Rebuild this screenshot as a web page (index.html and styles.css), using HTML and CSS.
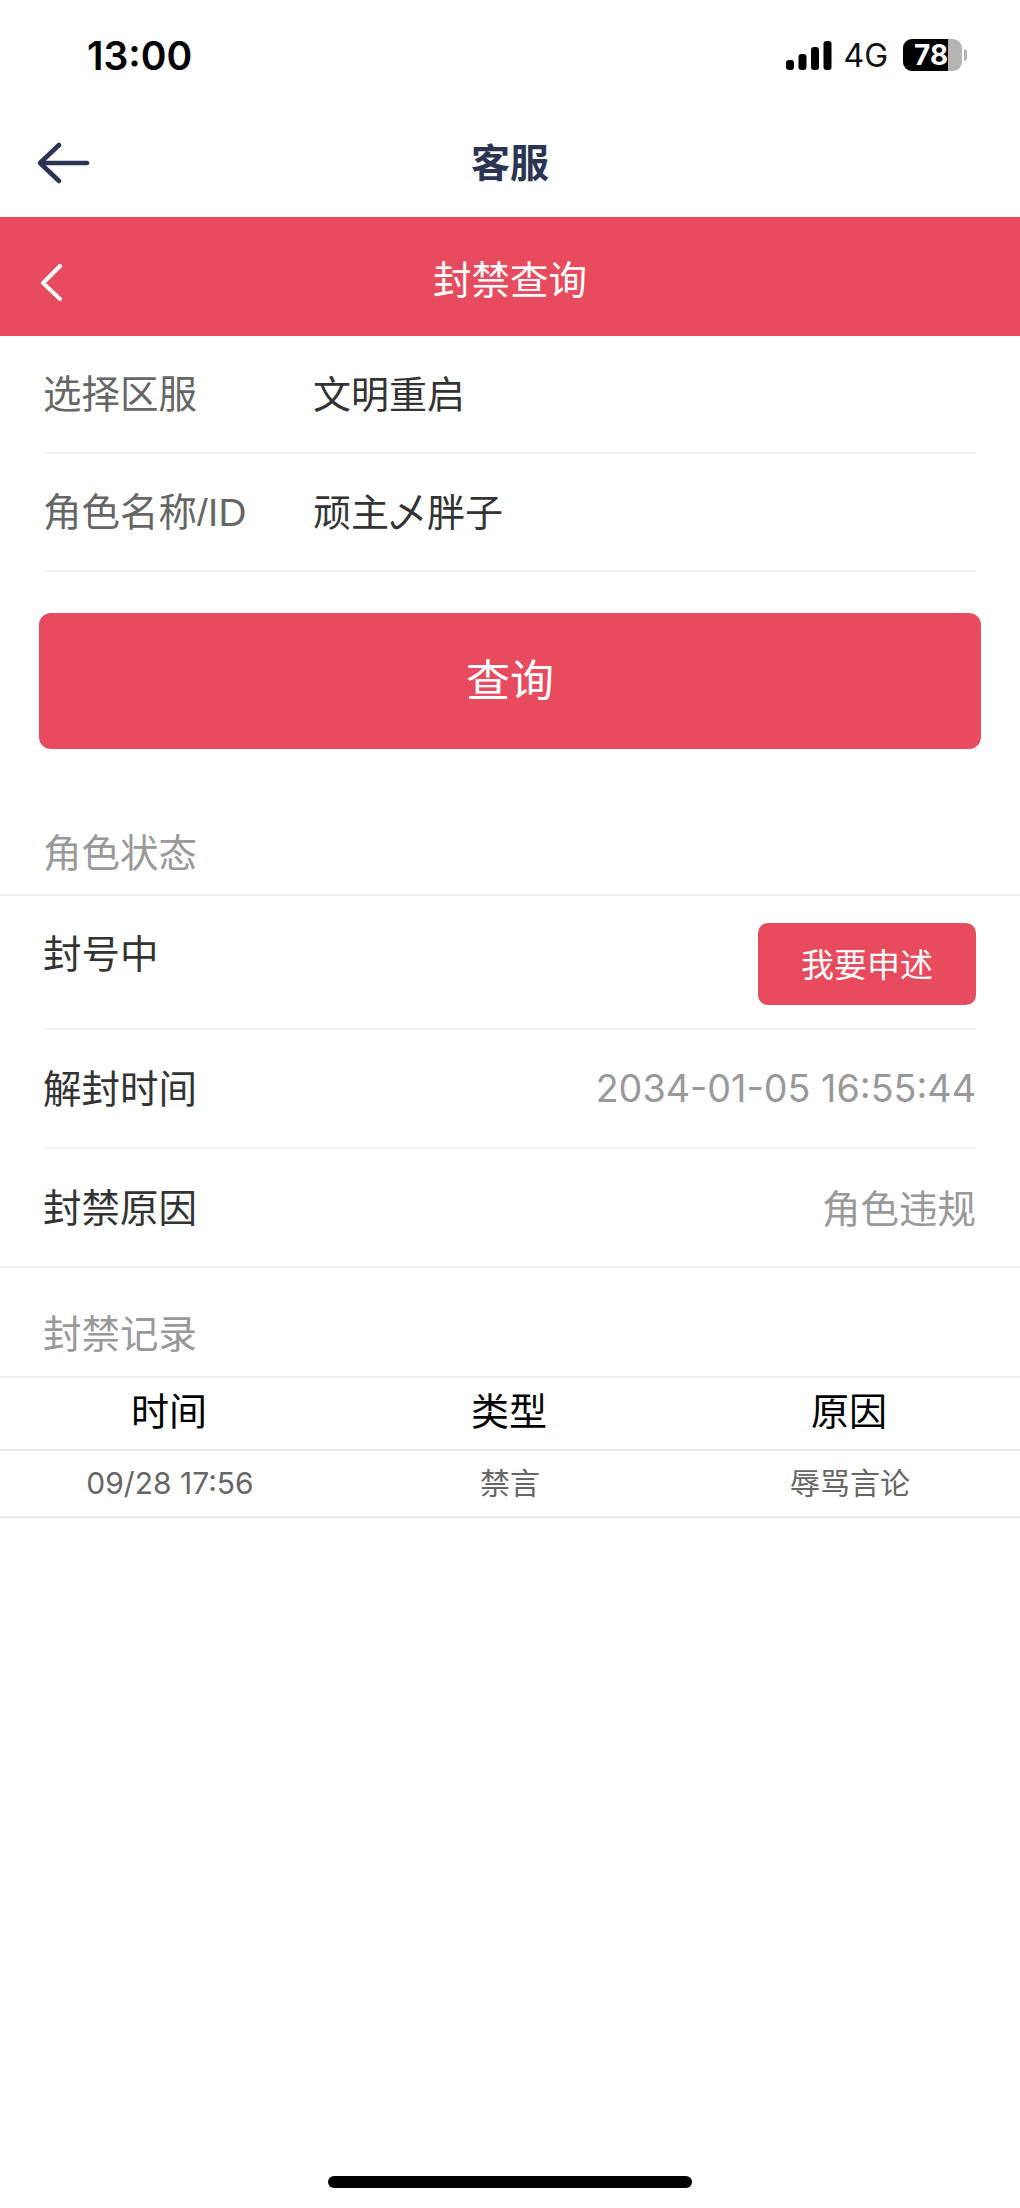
FILE: index.html
```html
<!DOCTYPE html>
<html lang="zh-CN">
<head>
	<meta charset="UTF-8">
	<title>封禁查询</title>
	<link rel="stylesheet" href="styles.css">
</head>
<body>
	<div class="page">
		<div class="statusBar">
			<span class="time">13:00</span>
			<div class="statusRight">
				<svg class="signal" width="46" height="29" viewBox="0 0 46 29">
					<rect x="0" y="19" width="8" height="10" rx="3"/>
					<rect x="12.5" y="13" width="8" height="16" rx="3"/>
					<rect x="25" y="6" width="8" height="23" rx="3"/>
					<rect x="37.5" y="0" width="8" height="29" rx="3"/>
				</svg>
				<span class="net">4G</span>
				<div class="battery">
					<div class="batteryBody"><span class="batteryFill"><span class="batteryNum">78</span></span></div>
					<span class="batteryCap"></span>
				</div>
			</div>
		</div>

		<div class="navBar">
			<svg class="navBack" width="56" height="44" viewBox="0 0 56 44">
				<path d="M23 4 L4 22 L23 40 M4 22 H51" fill="none" stroke="#2c3454" stroke-width="4.600" stroke-linecap="round" stroke-linejoin="round"/>
			</svg>
			<span class="navTitle">客服</span>
		</div>

		<div class="redBar">
			<svg class="redBack" width="24" height="38" viewBox="0 0 24 38">
				<path d="M20 2 L3 19 L20 35" fill="none" stroke="#fff" stroke-width="4" stroke-linecap="round" stroke-linejoin="round"/>
			</svg>
			<span class="redTitle">封禁查询</span>
		</div>

		<div class="formRow">
			<span class="formLabel">选择区服</span>
			<span class="formValue">文明重启</span>
		</div>
		<div class="formRow">
			<span class="formLabel">角色名称/ID</span>
			<span class="formValue">顽主乄胖子</span>
		</div>

		<div class="queryBtn">查询</div>

		<div class="sectionTitle first">角色状态</div>
		<div class="infoRow appealRow">
			<span class="infoLabel">封号中</span>
			<span class="appealBtn">我要申述</span>
		</div>
		<div class="infoRow">
			<span class="infoLabel">解封时间</span>
			<span class="infoValue infoDate">2034-01-05 16:55:44</span>
		</div>
		<div class="infoRow last">
			<span class="infoLabel">封禁原因</span>
			<span class="infoValue">角色违规</span>
		</div>

		<div class="sectionTitle second">封禁记录</div>
		<div class="tableRow tableHead">
			<span>时间</span>
			<span>类型</span>
			<span>原因</span>
		</div>
		<div class="tableRow tableBody">
			<span class="cellDate">09/28 17:56</span>
			<span>禁言</span>
			<span>辱骂言论</span>
		</div>

		<div class="homeBar"></div>
	</div>
</body>
</html>
```

FILE: styles.css
```css
*{
	margin: 0px;
	padding: 0px;
	box-sizing: border-box;
}

body{
	background: #fff;
	font-family: "Inter", "Noto Sans CJK SC", "Liberation Sans", sans-serif;
}

.page{
	position: relative;
	width: 1020px;
	height: 2208px;
	overflow: hidden;
}

.statusBar{
	height: 110px;
	padding: 0px 53px 0px 87px;
	display: flex;
	align-items: center;
	justify-content: space-between;
}

.time{
	font-size: 39px;
	font-weight: 600;
	color: #000;
}

.statusRight{
	display: flex;
	align-items: center;
}

.signal{
	fill: #000;
	margin-right: 11px;
}

.net{
	font-size: 32px;
	color: #111;
	margin-right: 15px;
}

.battery{
	display: flex;
	align-items: center;
}

.batteryBody{
	width: 59px;
	height: 32px;
	background: #b4b4b4;
	border-radius: 9px;
	overflow: hidden;
}

.batteryFill{
	display: block;
	width: 45px;
	height: 32px;
	background: #000;
	overflow: hidden;
}

.batteryNum{
	display: block;
	padding-left: 11px;
	font-size: 28px;
	font-weight: 700;
	line-height: 32px;
	color: #fff;
}

.batteryCap{
	width: 3px;
	height: 12px;
	margin-left: 2px;
	background: #b4b4b4;
	border-radius: 0px 3px 3px 0px;
}

.navBar{
	position: relative;
	height: 107px;
	padding-bottom: 8px;
	display: flex;
	align-items: center;
	justify-content: center;
}

.navBack{
	position: absolute;
	left: 36px;
	top: 31px;
}

.navTitle{
	font-size: 39px;
	font-weight: 700;
	color: #2c3454;
}

.redBar{
	position: relative;
	height: 119px;
	background: #e84b5d;
	display: flex;
	align-items: center;
	justify-content: center;
}

.redBack{
	position: absolute;
	left: 40px;
	top: 47px;
}

.redTitle{
	font-size: 38.5px;
	color: #fff;
}

.formRow{
	height: 118px;
	padding-bottom: 6px;
	margin: 0px 44px;
	border-bottom: 2px solid #f4f4f4;
	display: flex;
	align-items: center;
	font-size: 38px;
}

.formLabel{
	width: 269px;
	font-family: "Liberation Sans", "Noto Sans CJK SC", sans-serif;
	font-size: 38.5px;
	margin-left: -1px;
	color: #666;
}

.formValue{
	margin-left: 1px;
	color: #333;
}

.queryBtn{
	height: 136px;
	margin: 41px 39px 0px;
	padding-bottom: 6px;
	background: #e84b5d;
	border-radius: 12px;
	color: #fff;
	font-size: 44px;
	display: flex;
	align-items: center;
	justify-content: center;
}

.sectionTitle{
	padding: 0px 43px;
	border-bottom: 2px solid #f0f0f0;
	font-size: 38.5px;
	color: #999;
	display: flex;
	align-items: center;
}

.sectionTitle.first{
	height: 147px;
	padding-top: 56px;
}

.sectionTitle.second{
	height: 110px;
	padding-top: 18px;
}

.infoRow{
	height: 119px;
	padding-bottom: 6px;
	margin: 0px 44px;
	border-bottom: 2px solid #f4f4f4;
	display: flex;
	align-items: center;
	justify-content: space-between;
	font-size: 38.5px;
}

.infoRow.appealRow{
	height: 134px;
	padding-bottom: 22px;
}

.infoRow.last{
	margin: 0px;
	padding: 0px 44px 5px;
}

.infoLabel{
	margin-left: -1px;
	color: #333;
}

.infoValue{
	margin-top: 2px;
	color: #999;
}

.infoDate{
	margin-top: 5px;
	font-size: 37.7px;
}

.appealBtn{
	width: 218px;
	height: 82px;
	margin-top: 25px;
	padding-bottom: 2px;
	background: #e84b5d;
	border-radius: 10px;
	color: #fff;
	font-size: 33px;
	display: flex;
	align-items: center;
	justify-content: center;
}

.tableRow{
	display: grid;
	grid-template-columns: 340px 340px 340px;
	align-items: center;
	text-align: center;
	border-bottom: 2px solid #eaeaea;
}

.tableHead{
	height: 73px;
	padding-bottom: 10px;
	font-size: 38px;
	color: #000;
}

.tableHead span{
	margin-left: -2px;
}

.tableBody{
	height: 67px;
	padding-bottom: 6px;
	font-size: 30px;
	color: #666;
}

.cellDate{
	margin-top: 5px;
}

.homeBar{
	position: absolute;
	left: 328px;
	top: 2176px;
	width: 364px;
	height: 12px;
	background: #000;
	border-radius: 6px;
}
```
